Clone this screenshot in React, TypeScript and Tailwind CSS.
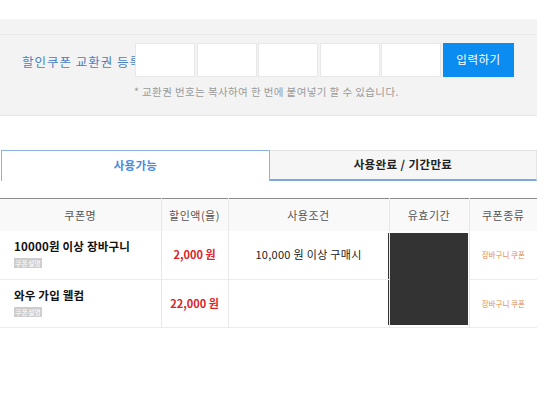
const FONT = "font-['Noto_Sans_CJK_KR','Noto_Sans',sans-serif]";

const coupons = [
  { name: "10000원 이상 장바구니", amount: "2,000 원", cond: "10,000 원 이상 구매시", kind: "장바구니 쿠폰" },
  { name: "와우 가입 웰컴", amount: "22,000 원", cond: "", kind: "장바구니 쿠폰" },
];

export default function App() {
  return (
    <div className={`${FONT} w-[546px] h-[410px] bg-white pt-[19px] overflow-hidden`}>
      <div className="w-[537px]">
        {/* 교환권 등록 */}
        <div className="h-[97px] bg-[#f3f3f3] border-b border-[#e6e6e6]">
          <div className="h-[16px] border-b border-[#ebebeb]" />
          <div className="flex items-center mt-[8px] h-[34px]">
            <div className="w-[135px] shrink-0 pl-[22px] pt-[4px] overflow-hidden whitespace-nowrap text-[12.5px] tracking-[1px] text-[#4a7fc0] leading-none">
              할인쿠폰 교환권 등록
            </div>
            <div className="flex gap-[1.5px]">
              {[0, 1, 2, 3, 4].map((i) => (
                <input
                  key={i}
                  className="w-[60px] h-[34px] bg-white border border-[#e8e8e8] outline-none"
                />
              ))}
            </div>
            <button className="ml-[2px] w-[71px] h-[34px] bg-[#0a8cf0] text-white text-[11.5px] tracking-[0.5px]">
              입력하기
            </button>
          </div>
          <p className="pl-[134px] mt-[10px] text-[10.5px] tracking-[0.4px] text-[#9a9a9a] leading-none">
            * 교환권 번호는 복사하여 한 번에 붙여넣기 할 수 있습니다.
          </p>
        </div>

        {/* 탭 */}
        <div className="mt-[34px] flex h-[31px]">
          <div className="w-[269px] ml-[1px] border border-b-0 border-[#8db3e6] flex items-center justify-center text-[11.5px] tracking-[0.3px] font-bold text-[#4a8be0]">
            사용가능
          </div>
          <div className="flex-1 bg-[#f6f6f6] border-t border-r border-[#e3e3e3] border-b-2 border-b-[#7fa8e0] flex items-center justify-center text-[11.5px] tracking-[0.4px] font-bold text-[#222]">
            사용완료 / 기간만료
          </div>
        </div>

        {/* 쿠폰 목록 */}
        <table className="mt-[17px] w-[537px] table-fixed border-collapse border-t border-[#8a8a8a] text-[11px]">
          <colgroup>
            <col className="w-[161px]" />
            <col className="w-[67px]" />
            <col className="w-[161px]" />
            <col className="w-[80px]" />
            <col className="w-[68px]" />
          </colgroup>
          <thead>
            <tr className="h-[32px] bg-[#f9f9f9] text-[#555] tracking-[0.5px]">
              <th className="font-normal">쿠폰명</th>
              <th className="font-normal border-l border-[#e8e8e8]">할인액(율)</th>
              <th className="font-normal border-l border-[#e8e8e8]">사용조건</th>
              <th className="font-normal border-l border-[#e8e8e8]">유효기간</th>
              <th className="font-normal border-l border-[#e8e8e8]">쿠폰종류</th>
            </tr>
          </thead>
          <tbody>
            {coupons.map((c, i) => (
              <tr key={i} className="h-[48.5px] border-b border-[#ececec]">
                <td className="pl-[14px] align-middle">
                  <div className="font-bold text-[#111] text-[11.5px] tracking-[0.2px] leading-[14px]">{c.name}</div>
                  <span className="inline-block mt-[2px] px-[1px] bg-[#cdcdcd] text-white text-[7px] leading-[10px]">
                    쿠폰설명
                  </span>
                </td>
                <td className="text-center font-bold text-[#d8262b] border-l border-[#e8e8e8]">
                  {c.amount}
                </td>
                <td className="text-center text-[#222] tracking-[0.3px] border-l border-[#e8e8e8]">{c.cond}</td>
                {i === 0 && (
                  <td rowSpan={2} className="p-0 border-l border-[#e8e8e8]">
                    <div className="ml-[-2px] w-[80px] h-[92px] bg-[#333333]" />
                  </td>
                )}
                <td className="text-center text-[7.5px] text-[#e08a4e] border-l border-[#e8e8e8]">
                  {c.kind}
                </td>
              </tr>
            ))}
          </tbody>
        </table>
      </div>
    </div>
  );
}
